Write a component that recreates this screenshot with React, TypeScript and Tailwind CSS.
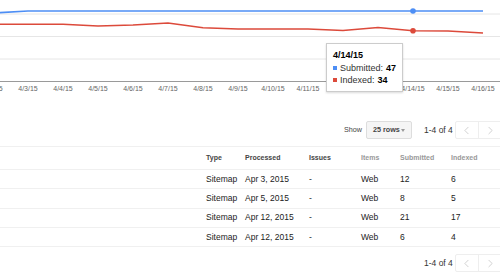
import { ChevronLeft, ChevronRight } from "lucide-react";

const labels = [
  "4/2/15", "4/3/15", "4/4/15", "4/5/15", "4/6/15", "4/7/15", "4/8/15", "4/9/15",
  "4/10/15", "4/11/15", "4/12/15", "4/13/15", "4/14/15", "4/15/15", "4/16/15",
];

const indexed = [24.3, 24.3, 24.3, 26, 25, 23, 27.7, 29, 29, 29, 30.5, 27.5, 30.7, 31, 33];
const submitted = [13, 11, 11, 11, 11, 11, 11, 11, 11, 11, 11, 11, 11, 11, 11];

const xAt = (i: number) => -7 + 35 * i;

const rows = [
  { processed: "Apr 3, 2015", submitted: "12", indexed: "6" },
  { processed: "Apr 5, 2015", submitted: "8", indexed: "5" },
  { processed: "Apr 12, 2015", submitted: "21", indexed: "17" },
  { processed: "Apr 12, 2015", submitted: "6", indexed: "4" },
];

function Chart() {
  const pts = (ys: number[]) => ys.map((y, i) => `${xAt(i)},${y}`).join(" ");
  return (
    <div className="relative h-[100px]">
      <svg width="500" height="100" className="block">
        {[14, 36.5, 59].map((y) => (
          <line key={y} x1="0" x2="500" y1={y} y2={y} stroke="#e6e6e6" strokeWidth="1" />
        ))}
        <line x1="0" x2="500" y1="81.5" y2="81.5" stroke="#9a9a9a" strokeWidth="1" />
        <polyline points={pts(submitted)} fill="none" stroke="#4d8ef5" strokeWidth="1.6" />
        <polyline points={pts(indexed)} fill="none" stroke="#dc4a3b" strokeWidth="1.6" />
        <circle cx={xAt(12)} cy="11" r="2.8" fill="#4d8ef5" />
        <circle cx={xAt(12)} cy="30.7" r="2.8" fill="#dc4a3b" />
        {labels.map((l, i) => (
          <text
            key={l}
            x={xAt(i)}
            y="90.5"
            textAnchor="middle"
            fontSize="7"
            fill="#666"
            fontFamily="'Liberation Sans', Arial, sans-serif"
          >
            {l}
          </text>
        ))}
      </svg>
      <div className="absolute left-[326px] top-[43px] w-[77px] h-[49px] bg-white border border-[#cccccc] shadow-[0_1px_2px_rgba(0,0,0,0.15)] pl-[6px] pt-[5px] text-[9px] leading-[12.5px] text-[#333]">
        <div className="font-bold text-black">4/14/15</div>
        <div className="flex items-center">
          <span className="w-[4px] h-[4px] bg-[#4d8ef5] mr-[3px]" />
          <span>Submitted:</span>
          <span className="ml-[3px] font-bold text-black">47</span>
        </div>
        <div className="flex items-center">
          <span className="w-[4px] h-[4px] bg-[#dc4a3b] mr-[3px]" />
          <span>Indexed:</span>
          <span className="ml-[3px] font-bold text-black">34</span>
        </div>
      </div>
    </div>
  );
}

function Pager() {
  return (
    <div className="flex items-center shrink-0 whitespace-nowrap">
      <span className="text-[8.5px] text-[#333]">1-4 of 4</span>
      <div className="ml-[2px] flex shrink-0 h-[18px] border border-[#eeeeee] rounded-[2px]">
        <div className="w-[23px] flex items-center justify-center border-r border-[#eeeeee]">
          <ChevronLeft size={13} strokeWidth={1.4} color="#c4c4c4" />
        </div>
        <div className="w-[24px] flex items-center justify-center">
          <ChevronRight size={13} strokeWidth={1.4} color="#c4c4c4" />
        </div>
      </div>
    </div>
  );
}

export default function App() {
  return (
    <div className="w-[500px] h-[276px] overflow-hidden bg-white font-['Liberation_Sans',Arial,sans-serif]">
      <Chart />
      <div className="flex items-center h-[18px] mt-[21px] mb-[7px] pl-[344px] whitespace-nowrap">
        <span className="text-[7.2px] text-[#444] shrink-0">Show</span>
        <div className="ml-[4px] w-[46px] shrink-0 h-[18px] flex items-center justify-between pl-[6px] pr-[6px] bg-[#f5f5f5] border border-[#dddddd] rounded-[2px]">
          <span className="text-[7.2px] font-bold text-[#444]">25 rows</span>
          <span className="w-0 h-0 border-l-[2.5px] border-r-[2.5px] border-t-[3px] border-l-transparent border-r-transparent border-t-[#999]" />
        </div>
        <div className="ml-[12px] shrink-0">
          <Pager />
        </div>
      </div>
      <div className="border-t border-[#f0f0f0]">
        <div className="grid grid-cols-[206px_39px_64px_52px_39px_51px_49px] h-[23px] items-center border-b border-[#f0f0f0] text-[7px] font-bold">
          <div />
          <div className="text-[#444]">Type</div>
          <div className="text-[#444]">Processed</div>
          <div className="text-[#444]">Issues</div>
          <div className="text-[#999]">Items</div>
          <div className="text-[#999]">Submitted</div>
          <div className="text-[#999]">Indexed</div>
        </div>
        {rows.map((r, i) => (
          <div
            key={i}
            className="grid grid-cols-[206px_39px_64px_52px_39px_51px_49px] h-[19.25px] items-center border-b border-[#f0f0f0] text-[8.5px] text-[#222]"
          >
            <div />
            <div>Sitemap</div>
            <div>{r.processed}</div>
            <div>-</div>
            <div>Web</div>
            <div>{r.submitted}</div>
            <div>{r.indexed}</div>
          </div>
        ))}
      </div>
      <div className="flex items-center h-[18px] mt-[7px] pl-[424px] whitespace-nowrap">
        <Pager />
      </div>
    </div>
  );
}
